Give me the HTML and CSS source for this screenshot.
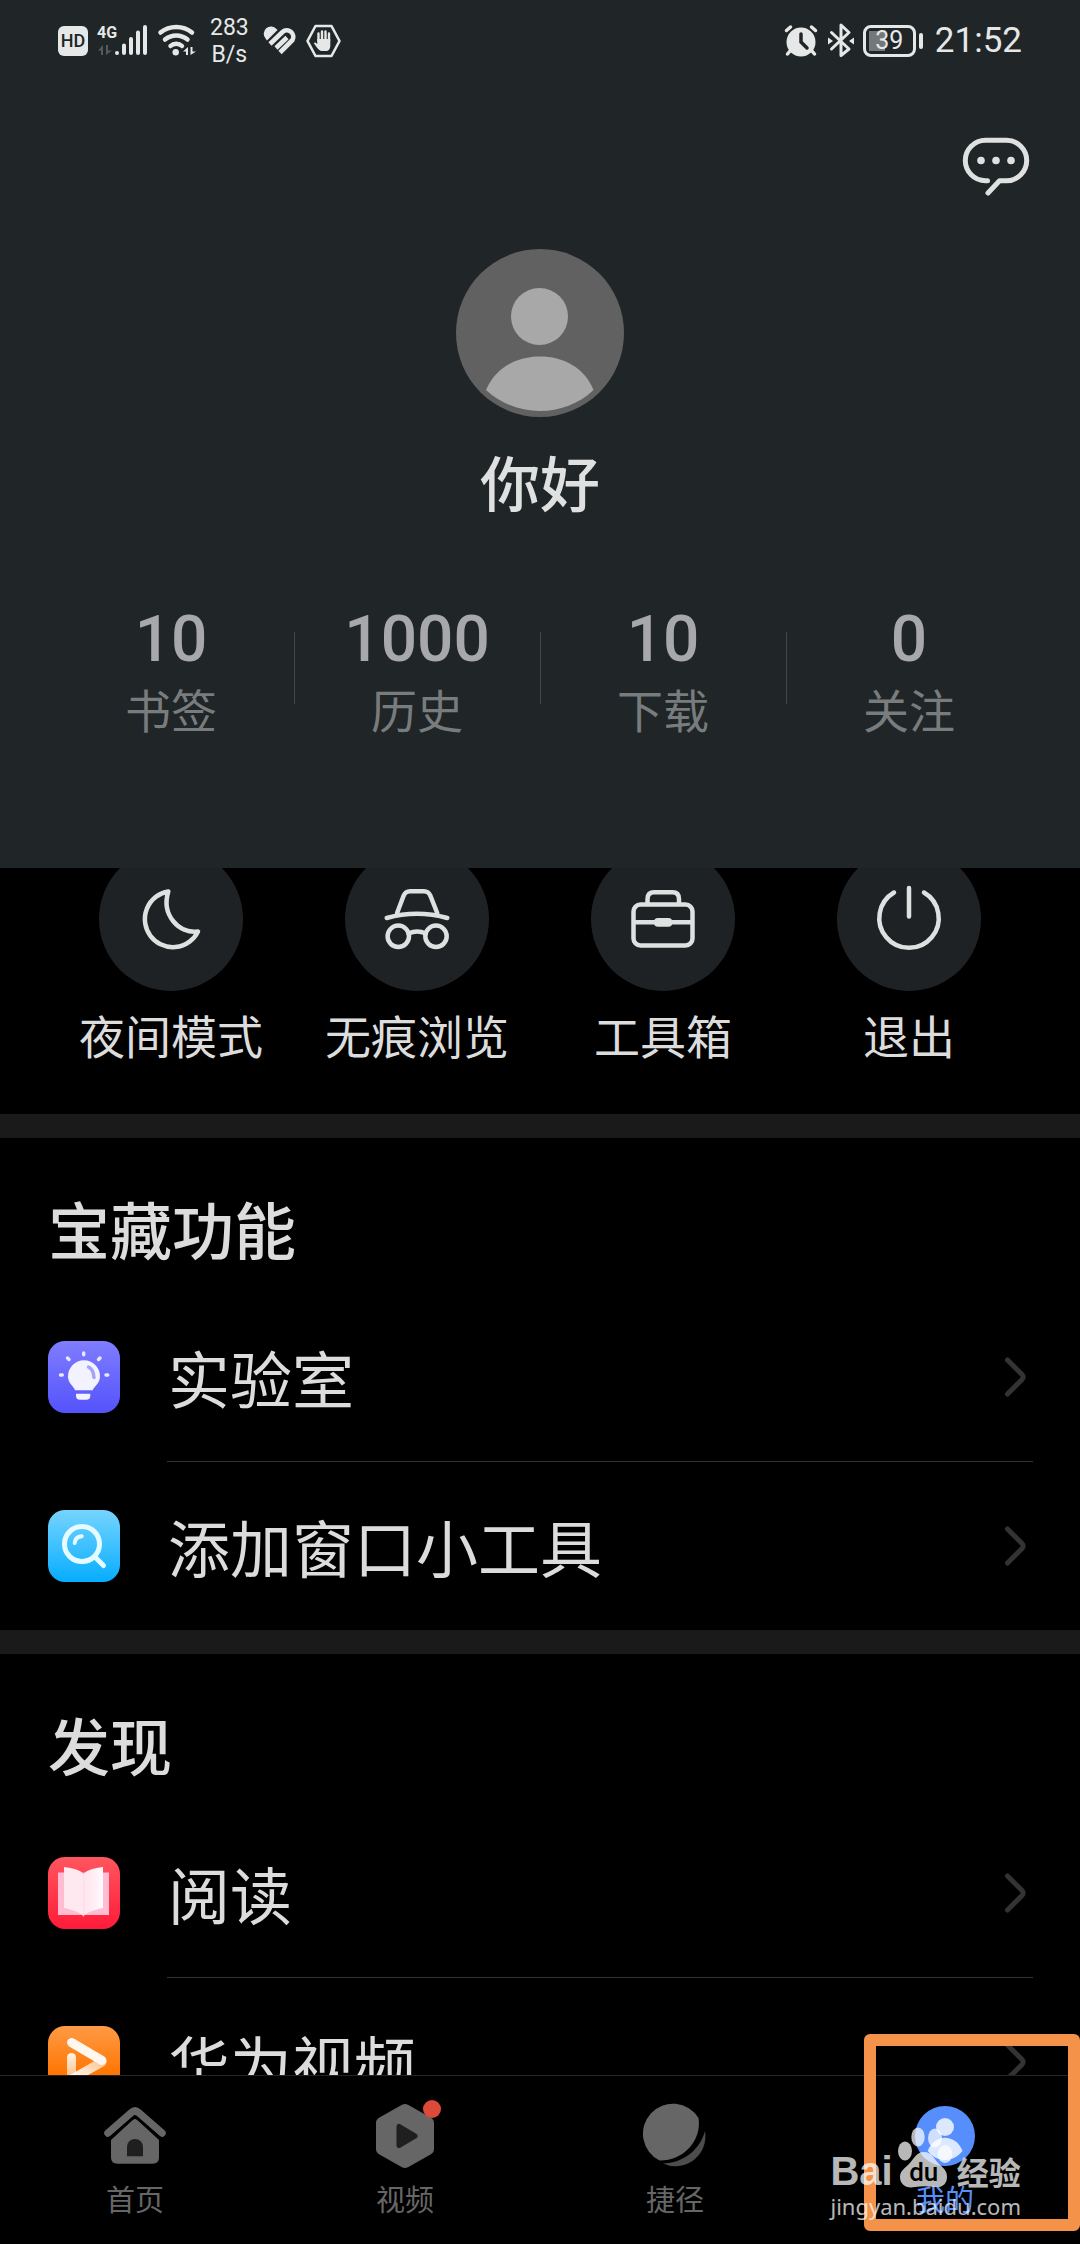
FILE: index.html
```html
<!DOCTYPE html>
<html lang="zh-CN">
<head>
    <meta charset="UTF-8">
    <meta name="viewport" content="width=device-width, initial-scale=1.0">
    <title>我的</title>
    <link rel="stylesheet" href="styles.css">
</head>
<body>
    <header class="profile">
        <div class="status-bar">
            <div class="status-group">
                <span class="hd-badge">HD</span>
                <svg width="51" height="40" viewBox="0 0 51 40" fill="#e6e8e8">
                    <text x="0" y="17" class="network-type">4G</text>
                    <path d="M1 29.500 6 24v10H4v-4.500zM15 29.500 9 34V24h2v5.500z" fill="#555a5c"/>
                    <g stroke="#e6e8e8" stroke-width="4" stroke-linecap="round">
                        <path d="M20 32v.1M27 24.500v7.500M34 18v14M41 11.500v20.500M48 6v26"/>
                    </g>
                </svg>
                <svg width="40" height="40" viewBox="0 0 40 40" fill="none" stroke="#e6e8e8" stroke-width="4.500" stroke-linecap="round">
                    <path d="M3.500 11.500C12.500 4 26 4 35 11.500M8 18.500c6.500-5.500 16-5.500 22.500 0M13.500 25c3-3 8.500-3 11.500 0"/>
                    <circle cx="18.700" cy="31.300" r="3.200" fill="#e6e8e8" stroke="none"/>
                    <path d="M26 30.500 31 26v8h-2v-3.500zM39 30.500 33.500 34v-8h2v4.500z" fill="#e6e8e8" stroke="none"/>
                </svg>
                <span class="net-speed">283<br>B/s</span>
                <svg width="34" height="40" viewBox="0 0 34 40" fill="none" stroke="#e6e8e8" stroke-width="4.600">
                    <path d="M2.500 17.500A7 7 0 0 1 13.500 8l1 1L4 19.500z" fill="#e6e8e8" stroke="none"/>
                    <path d="M7 23 19.500 11a6.500 6.500 0 0 1 10 8L17 31.500M13 27 24 16.500"/>
                </svg>
                <svg width="36" height="40" viewBox="0 0 36 40" fill="none" stroke="#e6e8e8" stroke-width="2.600" stroke-linejoin="round">
                    <path d="M9.500 5h16l8 15-8 15h-16L1.500 20z"/>
                    <path d="M12.500 20V12.500M16 19V10.500M19.500 19V10.500M23 20V12.500" stroke-width="2.400" stroke-linecap="round"/>
                    <path d="M11.300 18h13v7c0 3-2 5-4 5h-4c-3 0-5-2.500-8.500-8 1-1 2-.5 3.500 1z" fill="#e6e8e8" stroke="none"/>
                </svg>
            </div>
            <div class="status-group">
                <svg width="36" height="40" viewBox="0 0 36 40" fill="none" stroke="#e6e8e8" stroke-width="3.500" stroke-linecap="round">
                    <circle cx="18" cy="21" r="14.500" fill="#e6e8e8" stroke="none"/>
                    <path d="M3.500 9.500 7.500 6M32.500 9.500 28.500 6M7 30l-2.500 3M29 30l2.500 3"/>
                    <path d="M18 13v8l6 6" stroke="#202527"/>
                </svg>
                <svg width="26" height="40" viewBox="0 0 26 40" fill="none" stroke="#e6e8e8" stroke-width="3" stroke-linecap="round" stroke-linejoin="round">
                    <path d="M3.500 11.500 21 28 13 34.500V4L21 11.500 3.500 28"/>
                    <path d="M0 16.500 5 20l-5 3.500zM26 16.500 21 20l5 3.500z" fill="#e6e8e8" stroke="none"/>
                </svg>
                <div class="battery">39</div>
                <time class="clock">21:52</time>
            </div>
        </div>

        <div class="toolbar">
            <button type="button" class="icon-btn" aria-label="消息">
                <svg width="72" height="72" viewBox="0 0 72 72" fill="none" stroke="#dfe1e1" stroke-width="5" stroke-linecap="round" stroke-linejoin="round">
                    <path d="M27.500 48.700h-2a20.200 20.200 0 0 1 0-40.400h21a20.200 20.200 0 0 1 0 40.400h-7L28 61"/>
                    <g fill="#dfe1e1" stroke="none">
                        <circle cx="21" cy="28.500" r="3.800"/>
                        <circle cx="36" cy="28.500" r="3.800"/>
                        <circle cx="51" cy="28.500" r="3.800"/>
                    </g>
                </svg>
            </button>
        </div>

        <svg class="avatar" viewBox="0 0 168 168">
            <circle cx="84" cy="84" r="84" fill="#616161"/>
            <circle cx="83.500" cy="67.500" r="28.500" fill="#a8a8a8"/>
            <path d="M30 141c10-23 31-33.500 54-33.500s44 10.500 53.500 33.500c-14.500 14-34.500 21-53.500 21s-39-7-54-21z" fill="#a8a8a8"/>
        </svg>
        <h1 class="username">你好</h1>

        <div class="stats">
            <a class="stat" href="#"><span class="stat-value">10</span><span class="stat-label">书签</span></a>
            <a class="stat" href="#"><span class="stat-value">1000</span><span class="stat-label">历史</span></a>
            <a class="stat" href="#"><span class="stat-value">10</span><span class="stat-label">下载</span></a>
            <a class="stat" href="#"><span class="stat-value">0</span><span class="stat-label">关注</span></a>
        </div>
    </header>

    <main class="content">
        <div class="quick-actions">
            <button type="button" class="quick">
                <span class="quick-icon">
                    <svg viewBox="0 0 72 72"><path d="M33.300 8.500A28 28 0 1 0 63 48.500C44 51 26 32 33.300 8.500z"/></svg>
                </span>
                夜间模式
            </button>
            <button type="button" class="quick">
                <span class="quick-icon">
                    <svg viewBox="0 0 72 72">
                        <path d="M16 30.300 22.500 13q2-4.700 6.500-4.700h14q4.500 0 6.500 4.700l6.800 17.300M5.700 35Q36 26.500 66.300 35"/>
                        <circle cx="17.300" cy="53.300" r="10.700"/>
                        <circle cx="55" cy="53.300" r="10.700"/>
                        <path d="M27.500 50.500q8.700-4 17.300 0"/>
                    </svg>
                </span>
                无痕浏览
            </button>
            <button type="button" class="quick">
                <span class="quick-icon">
                    <svg viewBox="0 0 72 72">
                        <rect x="6.500" y="21.500" width="59" height="41" rx="7"/>
                        <path d="M20.500 21v-5q0-6.800 6.500-6.800h18.500q6.500 0 6.500 6.800v5M7 39.300h58"/>
                        <rect x="27" y="35" width="18.300" height="8.700" rx="4" fill="#dfe1e1" stroke="none"/>
                    </svg>
                </span>
                工具箱
            </button>
            <button type="button" class="quick">
                <span class="quick-icon">
                    <svg viewBox="0 0 72 72"><path d="M21 9.500a29.700 29.700 0 1 0 30 0M36 5v28.500"/></svg>
                </span>
                退出
            </button>
        </div>

        <section class="section">
            <h2 class="section-title">宝藏功能</h2>
            <a class="row" href="#">
                <svg class="row-icon" viewBox="0 0 72 72">
                    <defs>
                        <linearGradient id="lab" x2="0" y2="1"><stop stop-color="#7f7dff"/><stop offset="1" stop-color="#5553fb"/></linearGradient>
                    </defs>
                    <rect width="72" height="72" rx="17" fill="url(#lab)"/>
                    <path d="M27 49.300c-1-4-7-6.500-7-14a16 16 0 0 1 32 0c0 7.500-6 10-7.300 14zM28 52.700h14.300v2q0 4-4 4h-6.300q-4 0-4-4z" fill="#f3f2ff"/>
                    <path d="M40.500 26q5 2.500 5.500 10.500" fill="none" stroke="#a5a3fa" stroke-width="3.500" stroke-linecap="round"/>
                    <path d="M35.700 12v1.800M19.500 17l1.500 1.500M52 17l-1.500 1.500M12.500 34h1.800M58 34h1.800" fill="none" stroke="#e9e8ff" stroke-width="3.400" stroke-linecap="round"/>
                </svg>
                <span class="row-text">实验室</span>
                <svg class="chevron" viewBox="0 0 36 48"><path d="M11.500 7 26 21.500q2.200 2.500 0 5L11.500 41"/></svg>
            </a>
            <a class="row" href="#">
                <svg class="row-icon" viewBox="0 0 72 72">
                    <defs>
                        <linearGradient id="find" x2="0" y2="1"><stop stop-color="#76d4ff"/><stop offset="1" stop-color="#06adff"/></linearGradient>
                    </defs>
                    <rect width="72" height="72" rx="17" fill="url(#find)"/>
                    <g fill="none" stroke="#e4fbff" stroke-width="5" stroke-linecap="round">
                        <circle cx="34" cy="34" r="17.500"/>
                        <path d="m47.500 47.500 8 8"/>
                        <path d="M26.700 33q.3-6 7-6.700" stroke-width="4"/>
                    </g>
                </svg>
                <span class="row-text">添加窗口小工具</span>
                <svg class="chevron" viewBox="0 0 36 48"><path d="M11.500 7 26 21.500q2.200 2.500 0 5L11.500 41"/></svg>
            </a>
        </section>

        <section class="section">
            <h2 class="section-title">发现</h2>
            <a class="row" href="#">
                <svg class="row-icon" viewBox="0 0 72 72">
                    <defs>
                        <linearGradient id="read" x2="0" y2="1"><stop stop-color="#ff565e"/><stop offset="1" stop-color="#ff1b39"/></linearGradient>
                        <linearGradient id="page"><stop stop-color="#ffe3ec"/><stop offset="1" stop-color="#fffafb"/></linearGradient>
                    </defs>
                    <rect width="72" height="72" rx="17" fill="url(#read)"/>
                    <path d="M10 15.500h51V58H10z" fill="#ffbcd3"/>
                    <path d="M16 10c9 1 17 3 19.500 7.500V60c-1-4-10-7-19.500-9z" fill="#ffe9f0"/>
                    <path d="M55 10c-9 1-17 3-19.500 7.500V60c1-4 10-7 19.500-9z" fill="url(#page)"/>
                </svg>
                <span class="row-text">阅读</span>
                <svg class="chevron" viewBox="0 0 36 48"><path d="M11.500 7 26 21.500q2.200 2.500 0 5L11.500 41"/></svg>
            </a>
            <a class="row" href="#">
                <svg class="row-icon" viewBox="0 0 72 72">
                    <defs>
                        <linearGradient id="video" x2="0" y2="1"><stop stop-color="#ff9a45"/><stop offset=".7" stop-color="#ff7400"/></linearGradient>
                        <linearGradient id="fold" x1="1" x2="0" y2="1"><stop stop-color="#ffc58c"/><stop offset="1" stop-color="#fff"/></linearGradient>
                        <linearGradient id="stem" x2="0" y2="1"><stop stop-color="#fff4e8"/><stop offset="1" stop-color="#ffbd80"/></linearGradient>
                    </defs>
                    <rect width="72" height="72" rx="17" fill="url(#video)"/>
                    <path d="M19 31.500a4.500 4.500 0 0 1 9 0V52h-9z" fill="url(#stem)"/>
                    <path d="M54 36 24 53" stroke="url(#fold)" stroke-width="9" stroke-linecap="round"/>
                    <path d="M23.500 16.500 54 34.500" stroke="#fff6ee" stroke-width="9" stroke-linecap="round"/>
                </svg>
                <span class="row-text">华为视频</span>
                <svg class="chevron" viewBox="0 0 36 48"><path d="M11.500 7 26 21.500q2.200 2.500 0 5L11.500 41"/></svg>
            </a>
        </section>
    </main>

    <nav class="tab-bar">
        <a class="tab" href="#">
            <svg viewBox="0 0 72 72" fill="#666">
                <path d="M9 33 32.500 12.500q3.500-3 7 0L63 33" fill="none" stroke="#666" stroke-width="7.500" stroke-linecap="round"/>
                <path d="M12 40 33.500 20q2.500-2 5 0L60 40v17.500q0 6.200-6.500 6.200h-35q-6.500 0-6.500-6.200z"/>
                <path d="M28 56.300V47a8 8 0 0 1 16 0v9.300z" fill="#1f1f1f"/>
                <path d="M10 39 33.500 18.500q2.500-2 5 0L62 39" fill="none" stroke="#000" stroke-width="2.500"/>
            </svg>
            首页
        </a>
        <a class="tab" href="#">
            <svg viewBox="0 0 72 72" fill="#666" stroke-linejoin="round">
                <path d="M36 10 59 23v26L36 62 13 49V23z" stroke="#666" stroke-width="12"/>
                <path d="M30 26.500v19L46 36z" fill="#1f1f1f" stroke="#1f1f1f" stroke-width="5"/>
            </svg>
            <span class="badge"></span>
            视频
        </a>
        <a class="tab" href="#">
            <svg viewBox="0 0 72 72" fill="#666">
                <path d="M20.500 60.500A30 30 0 1 1 59.500 18C63 40 45 61 20.500 60.500z"/>
                <path d="M66 31A30 30 0 0 1 24 63.500C44 63 61 50 66 31z" fill="#4d4d4d"/>
            </svg>
            捷径
        </a>
        <a class="tab active" href="#">
            <svg viewBox="0 0 72 72" fill="#dbe8ff">
                <circle cx="36" cy="36" r="30" fill="#568ffb"/>
                <circle cx="36" cy="27" r="9"/>
                <path d="M18.700 51c3-8.500 10-13.300 17.300-13.300S50.500 42.500 53.500 51C48 57.500 42 60 36 60s-12-2.500-17.300-9z"/>
            </svg>
            我的
        </a>
    </nav>

    <div class="highlight"></div>
    <div class="watermark">
        <div class="watermark-logo">
            <span class="brand">Bai</span>
            <span class="paw">
                <svg width="56" height="66" viewBox="0 0 56 66" fill="#fff">
                    <ellipse cx="8" cy="27" rx="7" ry="9.500"/>
                    <ellipse cx="21" cy="13" rx="6.700" ry="9.500"/>
                    <ellipse cx="38" cy="14" rx="7" ry="9.500"/>
                    <ellipse cx="48" cy="30" rx="7.500" ry="9"/>
                    <path d="M27 28c8 0 10 7 15 12 6 5 8 8 8 13 0 7-5 11-12 10-7-1-14-1-20 0C9 65 3 60 3 53c0-6 4-8 9-13s7-12 15-12z"/>
                </svg>
                <span class="paw-text">du</span>
            </span>
            <span class="brand-cn">经验</span>
        </div>
        <span class="watermark-url">jingyan.baidu.com</span>
    </div>
</body>
</html>
```

FILE: styles.css
```css
* {
    margin: 0;
    padding: 0;
    box-sizing: border-box;
}

body {
    display: flex;
    flex-direction: column;
    position: relative;
    height: 100vh;
    overflow: hidden;
    background-color: #000;
    color: #dcdcdc;
    font-family: "Noto Sans CJK SC", sans-serif;
}

a {
    color: inherit;
    text-decoration: none;
}

button {
    background: none;
    border: none;
    color: inherit;
    font: inherit;
    cursor: pointer;
}

svg {
    display: block;
    flex-shrink: 0;
}

/* Header */
.profile {
    flex-shrink: 0;
    display: flex;
    flex-direction: column;
    align-items: center;
    padding-bottom: 136px;
    background-color: #202527;
}

.status-bar {
    display: flex;
    justify-content: space-between;
    width: 100%;
    height: 82px;
    padding: 0 58px;
    color: #e6e8e8;
    font-family: Roboto, sans-serif;
}

.status-group {
    display: flex;
    align-items: center;
    gap: 9px;
}

.hd-badge {
    width: 30px;
    height: 30px;
    border-radius: 6px;
    background-color: #e6e8e8;
    color: #202527;
    font-size: 18px;
    font-weight: 500;
    line-height: 30px;
    text-align: center;
}

.network-type {
    font-size: 16px;
    font-weight: bold;
}

.net-speed {
    padding: 0 5px 0 4px;
    font-size: 23px;
    line-height: 27px;
    text-align: center;
}

.battery {
    position: relative;
    width: 53px;
    height: 32px;
    margin-right: 10px;
    border: 3px solid #e6e8e8;
    border-radius: 8px;
    background: linear-gradient(#74787a, #74787a) 3px center / 16px 20px no-repeat;
    font-size: 25px;
    line-height: 26px;
    text-align: center;
}

.battery::after {
    content: "";
    position: absolute;
    top: 5px;
    right: -10px;
    width: 4px;
    height: 16px;
    border-radius: 2px;
    background-color: #e6e8e8;
}

.clock {
    font-size: 35px;
    line-height: 40px;
}

.toolbar {
    display: flex;
    justify-content: flex-end;
    width: 100%;
    height: 167px;
    padding: 50px 48px 0;
}

.icon-btn {
    width: 72px;
    height: 72px;
}

.avatar {
    width: 168px;
    height: 168px;
}

.username {
    margin-top: 28px;
    color: #dfe1e1;
    font-size: 60px;
    font-weight: 500;
    line-height: 72px;
}

.stats {
    display: flex;
    width: 100%;
    margin-top: 87px;
    padding: 0 48px;
}

.stat {
    flex: 1;
    display: flex;
    flex-direction: column;
    align-items: center;
    gap: 8px;
}

.stat + .stat {
    background: linear-gradient(#43474a, #43474a) left center / 1px 72px no-repeat;
}

.stat-value {
    color: #a6a8a9;
    font-family: Roboto, sans-serif;
    font-size: 64px;
    font-weight: 500;
    line-height: 72px;
}

.stat-label {
    color: #797c7d;
    font-size: 46px;
    line-height: 48px;
}

.content {
    flex: 1;
    min-height: 0;
    overflow: hidden;
}

.quick-actions {
    display: flex;
    margin-top: -21px;
    padding: 0 48px 56px;
}

.quick {
    flex: 1;
    display: flex;
    flex-direction: column;
    align-items: center;
    gap: 19px;
    font-size: 46px;
    line-height: 48px;
}

.quick-icon {
    display: flex;
    align-items: center;
    justify-content: center;
    width: 144px;
    height: 144px;
    border-radius: 50%;
    background-color: #1f2224;
}

.quick-icon svg {
    width: 72px;
    height: 72px;
    fill: none;
    stroke: #dfe1e1;
    stroke-width: 4.5;
    stroke-linecap: round;
    stroke-linejoin: round;
}

.section {
    border-top: 24px solid #1a1a1a;
}

.section-title {
    padding: 54px 48px 29px;
    font-size: 62px;
    font-weight: 500;
    line-height: 72px;
}

.row {
    display: flex;
    align-items: center;
    height: 168px;
    padding: 0 48px;
}

.row + .row {
    height: 169px;
    border-top: 1px solid #333;
    border-image: linear-gradient(to right, transparent 168px, #333 168px, #333 calc(100% - 48px), transparent calc(100% - 48px)) 1;
}

.row-icon {
    width: 72px;
    height: 72px;
}

.row-text {
    flex: 1;
    margin-left: 48px;
    font-size: 62px;
    line-height: 72px;
}

.chevron {
    width: 36px;
    height: 48px;
    fill: none;
    stroke: #333;
    stroke-width: 5;
    stroke-linecap: round;
}

/* Bottom tabs */
.tab-bar {
    flex-shrink: 0;
    display: flex;
    height: 169px;
    padding-top: 24px;
    border-top: 1px solid #242424;
    background-color: #000;
}

.tab {
    flex: 1;
    display: flex;
    flex-direction: column;
    align-items: center;
    gap: 8px;
    position: relative;
    color: #666;
    font-size: 29px;
    line-height: 36px;
}

.tab svg {
    width: 72px;
    height: 72px;
}

.tab.active {
    color: #568ffb;
}

.badge {
    position: absolute;
    top: 0;
    left: calc(50% + 18px);
    width: 18px;
    height: 18px;
    border-radius: 50%;
    background-color: #dc4a3a;
}

/* Marker and watermark over the last tab */
.highlight {
    position: absolute;
    right: 0;
    bottom: 13px;
    width: 216px;
    height: 197px;
    border: 12px solid #f4924a;
    border-radius: 6px;
}

.watermark {
    position: absolute;
    right: 59px;
    bottom: 22px;
    display: flex;
    flex-direction: column;
    opacity: 0.72;
    color: #fff;
}

.watermark-logo {
    display: flex;
    align-items: flex-end;
    gap: 4px;
}

.brand {
    font-family: "Liberation Sans", sans-serif;
    font-size: 40px;
    font-weight: bold;
    line-height: 38px;
}

.paw {
    position: relative;
}

.paw-text {
    position: absolute;
    left: 0;
    bottom: 4px;
    width: 54px;
    color: #000;
    font-family: Roboto, sans-serif;
    font-size: 26px;
    font-weight: 500;
    line-height: 28px;
    text-align: center;
}

.brand-cn {
    font-size: 32px;
    font-weight: bold;
    line-height: 38px;
}

.watermark-url {
    font-family: "Noto Sans", sans-serif;
    font-size: 22px;
    line-height: 32px;
}
```
